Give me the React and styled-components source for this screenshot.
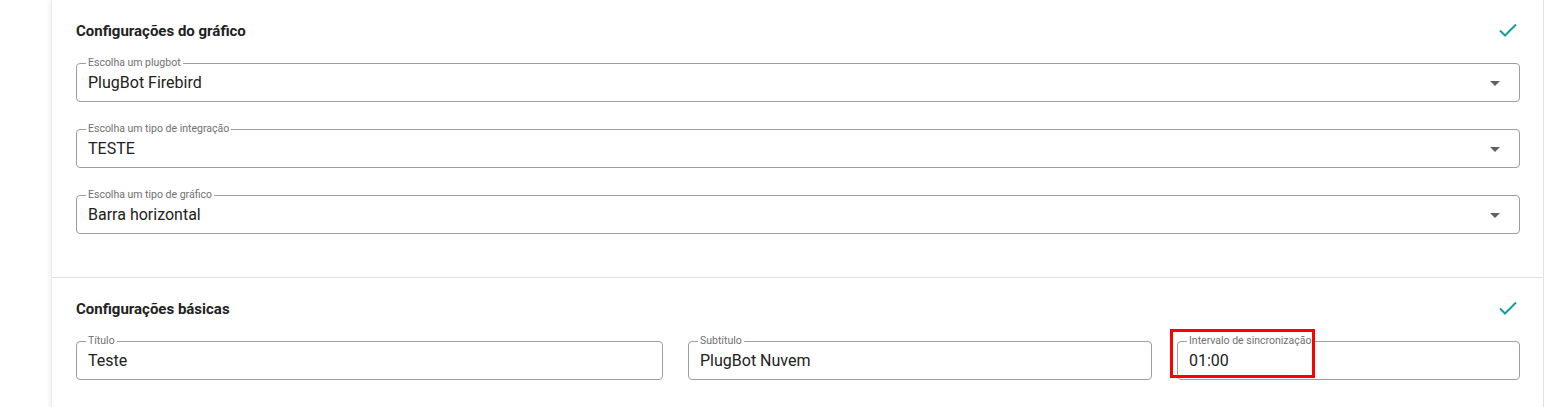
import React from "react";
import styled, { createGlobalStyle } from "styled-components";

const Global = createGlobalStyle`
  html, body { margin: 0; padding: 0; background: #ffffff; }
  body { font-family: Roboto, "Noto Sans", "Liberation Sans", sans-serif; color: #212121; }
  * { box-sizing: border-box; }
`;

const Page = styled.div`
  padding-left: 51px;
  padding-right: 1px;
  height: 407px;
  overflow: hidden;
`;

const Card = styled.div`
  background: #fff;
  border-left: 1px solid #ececec;
  border-right: 1px solid #e2e2e2;
  box-shadow: -3px 0 4px -1px rgba(0, 0, 0, 0.06);
  min-height: 420px;
`;

const Section = styled.section`
  padding: 20px 23px ${(p) => p.$bottom}px 24px;
  border-bottom: ${(p) => (p.$divider ? "1px solid #e0e0e0" : "none")};
`;

const Header = styled.div`
  display: flex;
  align-items: center;
  justify-content: space-between;
  height: 22px;
  margin-bottom: 21px;
`;

const Title = styled.h2`
  margin: 0;
  font-size: 15px;
  font-weight: 700;
  line-height: 22px;
  color: #212121;
`;

const Check = styled.svg`
  width: 20px;
  height: 16px;
  margin-right: 2px;
  margin-top: -2px;
`;

const Stack = styled.div`
  display: flex;
  flex-direction: column;
  gap: 27px;
`;

const Row = styled.div`
  display: grid;
  grid-template-columns: 587fr 464fr 343fr;
  gap: 25px;
`;

const FieldBox = styled.div`
  position: relative;
  height: 39px;
  border: 1px solid #9e9e9e;
  border-radius: 4px;
  display: flex;
  align-items: center;
  padding: 0 19px 0 11px;
`;

const Label = styled.span`
  position: absolute;
  top: -7px;
  left: 9px;
  padding: 0 2px;
  background: #fff;
  font-size: 10.5px;
  line-height: 12px;
  color: #6f6f6f;
  white-space: nowrap;
`;

const Value = styled.span`
  flex: 1;
  font-size: 16px;
  line-height: 20px;
  color: #212121;
  padding-top: 1px;
`;

const Arrow = styled.span`
  width: 0;
  height: 0;
  border-left: 5px solid transparent;
  border-right: 5px solid transparent;
  border-top: 5px solid #616161;
  margin-top: 2px;
`;

const Highlight = styled.div`
  position: absolute;
  left: -8px;
  top: -13px;
  width: 145px;
  height: 49px;
  border: 3px solid #ff0000;
  pointer-events: none;
`;

const CheckIcon = () => (
  <Check viewBox="0 0 20 16">
    <polyline
      points="2,8.5 7,13.5 18,2.5"
      fill="none"
      stroke="#119e9e"
      strokeWidth="2"
    />
  </Check>
);

const Field = ({ label, value, select, children }) => (
  <FieldBox>
    <Label>{label}</Label>
    <Value>{value}</Value>
    {select && <Arrow />}
    {children}
  </FieldBox>
);

export default function App() {
  return (
    <>
      <Global />
      <Page>
        <Card>
          <Section $divider $bottom={43}>
            <Header>
              <Title>Configurações do gráfico</Title>
              <CheckIcon />
            </Header>
            <Stack>
              <Field label="Escolha um plugbot" value="PlugBot Firebird" select />
              <Field label="Escolha um tipo de integração" value="TESTE" select />
              <Field label="Escolha um tipo de gráfico" value="Barra horizontal" select />
            </Stack>
          </Section>
          <Section $bottom={30}>
            <Header>
              <Title>Configurações básicas</Title>
              <CheckIcon />
            </Header>
            <Row>
              <Field label="Título" value="Teste" />
              <Field label="Subtítulo" value="PlugBot Nuvem" />
              <Field label="Intervalo de sincronização" value="01:00">
                <Highlight />
              </Field>
            </Row>
          </Section>
        </Card>
      </Page>
    </>
  );
}
